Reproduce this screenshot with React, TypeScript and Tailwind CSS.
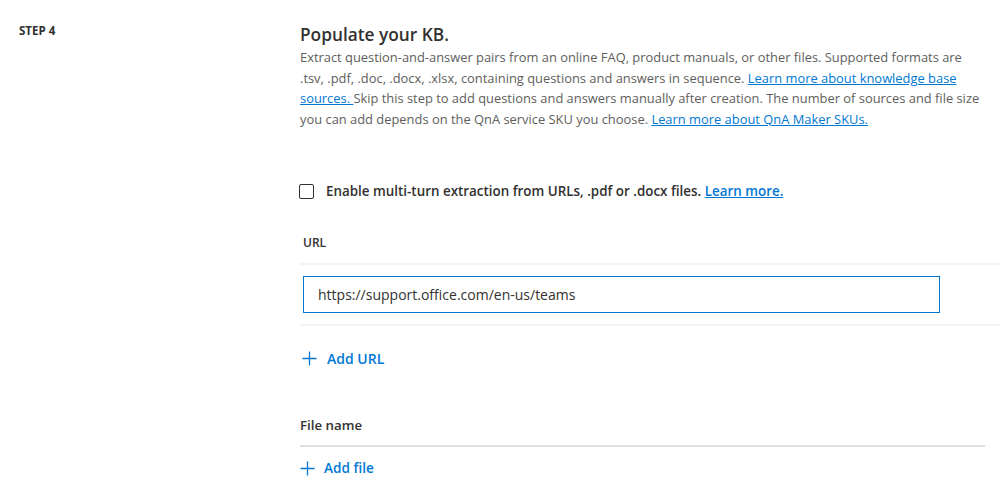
import React from "react";

const Plus = () => (
  <svg width="15" height="15" viewBox="0 0 15 15" className="shrink-0">
    <path d="M7.5 0.5V14.5M0.5 7.5H14.5" stroke="#0078d4" strokeWidth="1.3" fill="none" />
  </svg>
);

export default function App() {
  const font = { fontFamily: '"Open Sans", "Noto Sans", sans-serif' };
  return (
    <div className="w-[1000px] h-[499px] bg-white overflow-hidden flex" style={font}>
      <div className="w-[300px] shrink-0 pl-[19px] pt-[23px]">
        <div className="text-[11.5px] leading-[16px] font-bold text-[#323130]">STEP 4</div>
      </div>
      <div className="flex-1 flex flex-col">
        <h2 className="mt-[23px] text-[17.3px] leading-[24px] font-semibold text-[#323130]">Populate your KB.</h2>
        <p className="text-[12.9px] leading-[20.5px] text-[#605e5c] whitespace-nowrap">
          Extract question-and-answer pairs from an online FAQ, product manuals, or other files. Supported formats are
          <br />
          .tsv, .pdf, .doc, .docx, .xlsx, containing questions and answers in sequence.{" "}
          <a className="text-[#0078d4] underline">Learn more about knowledge base</a>
          <br />
          <a className="text-[#0078d4] underline">sources. </a>Skip this step to add questions and answers manually after creation. The number of sources and file size
          <br />
          you can add depends on the QnA service SKU you choose.{" "}
          <a className="text-[#0078d4] underline">Learn more about QnA Maker SKUs.</a>
        </p>
        <div className="mt-[52px] flex items-center h-[20px]">
          <div className="w-[15px] h-[15px] border border-[#323130] rounded-[2px] shrink-0 -ml-[1px]" />
          <span className="ml-[12px] text-[13.4px] font-semibold text-[#323130] whitespace-nowrap">
            Enable multi-turn extraction from URLs, .pdf or .docx files.{" "}
            <a className="text-[#0078d4] underline">Learn more.</a>
          </span>
        </div>
        <div className="mt-[34px] pl-[3px] text-[12px] leading-[16px] font-semibold text-[#323130]">URL</div>
        <div className="mt-[12px] h-[2px] bg-[#f3f2f1]" />
        <div className="mt-[11px] ml-[3px] w-[637px] h-[37px] border border-[#0078d4] flex items-center pl-[14px] text-[14px] text-[#323130]">
          https://support.office.com/en-us/teams
        </div>
        <div className="mt-[11px] h-[2px] bg-[#f3f2f1]" />
        <div className="mt-[22px] ml-[2px] h-[20px] flex items-center gap-[10px] text-[14px] font-semibold text-[#0078d4]">
          <Plus />
          <span>Add URL</span>
        </div>
        <div className="mt-[48px] h-[20px] flex items-center text-[13.3px] font-semibold text-[#323130]">File name</div>
        <div className="mt-[9px] mr-[15px] h-[2px] bg-[#e1dfdd]" />
        <div className="mt-[11px] h-[20px] flex items-center gap-[9px] text-[13.6px] font-semibold text-[#0078d4]">
          <Plus />
          <span>Add file</span>
        </div>
      </div>
    </div>
  );
}
